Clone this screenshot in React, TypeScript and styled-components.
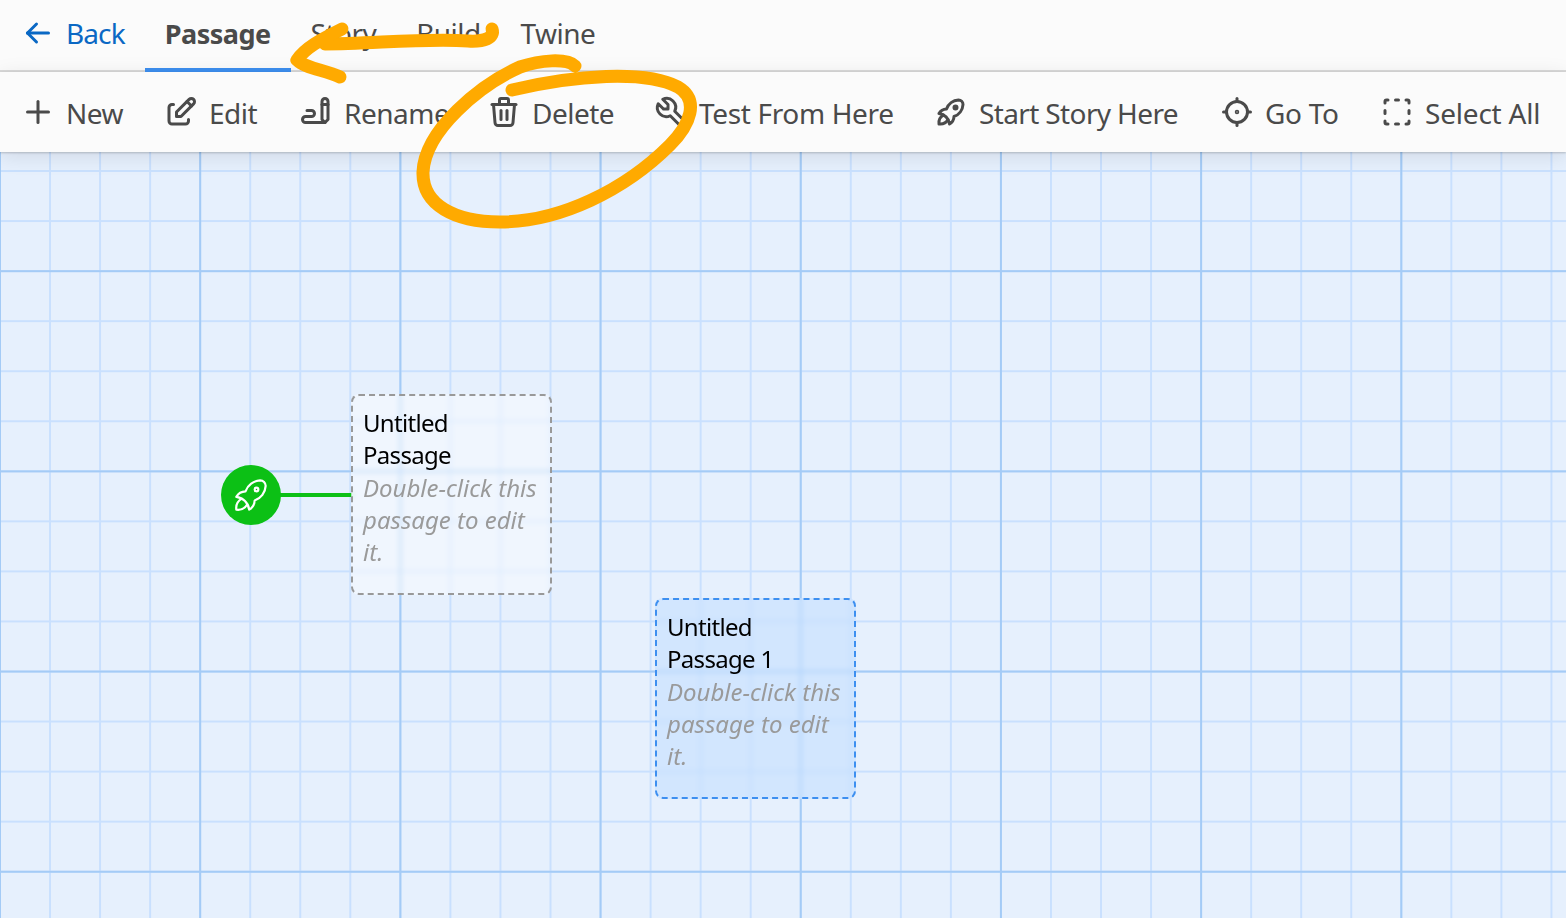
import React from "react";
import styled, { createGlobalStyle } from "styled-components";
import {
  TbArrowLeft,
  TbPlus,
  TbEdit,
  TbWriting,
  TbTrash,
  TbTool,
  TbRocket,
  TbFocus2,
  TbMarquee2,
} from "react-icons/tb";

const GlobalStyle = createGlobalStyle`
  html, body {
    margin: 0;
    padding: 0;
    height: 100%;
    overflow: hidden;
    font-family: "Noto Sans", "Open Sans", sans-serif;
  }
`;

const Page = styled.div`
  position: relative;
  width: 1566px;
  height: 918px;
  display: flex;
  flex-direction: column;
  overflow: hidden;
`;

const TabBar = styled.div`
  height: 70px;
  flex: none;
  display: flex;
  background: #fbfbfb;
  border-bottom: 2px solid #d9d9d9;
`;

const Tab = styled.div<{ $active?: boolean; $link?: boolean }>`
  position: relative;
  box-sizing: border-box;
  display: flex;
  align-items: center;
  gap: 10px;
  padding: 0 20px 4px;
  height: 70px;
  font-size: ${(p) => (p.$active ? 27 : 28)}px;
  letter-spacing: ${(p) => (p.$active ? -0.5 : p.$link ? -0.9 : -0.55)}px;
  font-weight: ${(p) => (p.$active ? 700 : 400)};
  color: ${(p) => (p.$link ? "#0a68c4" : "#4a4a4a")};
  svg {
    width: 36px;
    height: 36px;
  }
  &::after {
    content: "";
    display: ${(p) => (p.$active ? "block" : "none")};
    position: absolute;
    left: 0;
    right: 0;
    bottom: -2px;
    height: 4px;
    background: #3d8ff0;
  }
`;

const Toolbar = styled.div`
  position: relative;
  z-index: 2;
  height: 80px;
  flex: none;
  display: flex;
  align-items: center;
  gap: 41px;
  padding-left: 20px;
  background: #fbfbfb;
  box-shadow: 0 1px 2px rgba(0, 0, 0, 0.2), 0 4px 20px rgba(0, 0, 0, 0.1);
`;

const ToolButton = styled.div`
  display: flex;
  align-items: center;
  gap: 10px;
  font-size: 28px;
  color: #4a4a4a;
  white-space: nowrap;
  svg {
    width: 36px;
    height: 36px;
    flex: none;
  }
`;

const ToolLabel = styled.span<{ $width: number; $tracking: number }>`
  display: block;
  width: ${(p) => p.$width}px;
  padding-top: 2px;
  letter-spacing: ${(p) => p.$tracking}px;
`;

const Canvas = styled.div`
  position: relative;
  flex: 1;
  background-color: #e6f0fd;
  background-image:
    linear-gradient(to right, #a4cbf6 2px, transparent 2px),
    linear-gradient(to bottom, #a4cbf6 2px, transparent 2px),
    linear-gradient(to right, #c9e0fe 2px, transparent 2px),
    linear-gradient(to bottom, #c9e0fe 2px, transparent 2px);
  background-size:
    200.2px 200.2px,
    200.2px 200.2px,
    50.05px 50.05px,
    50.05px 50.05px;
  background-position:
    -1px -1px,
    -1px -82px,
    -1px -1px,
    -1px -32px;
`;

const Passage = styled.div<{ $selected?: boolean; $left: number; $top: number }>`
  position: absolute;
  left: ${(p) => p.$left}px;
  top: ${(p) => p.$top}px;
  box-sizing: border-box;
  width: 200.5px;
  height: 200.5px;
  padding: 11px 10px;
  border-radius: 8px;
  border: 2px dashed ${(p) => (p.$selected ? "#3d8ff0" : "#999")};
  background: ${(p) =>
    p.$selected ? "rgba(190, 220, 255, 0.5)" : "rgba(255, 255, 255, 0.4)"};
  backdrop-filter: blur(2.5px);
  font-size: 24px;
  line-height: 32px;
`;

const PassageTitle = styled.div`
  color: #000;
  letter-spacing: -0.7px;
`;

const PassageExcerpt = styled.div`
  color: #9a9a9a;
  font-style: italic;
  letter-spacing: 0;
  margin-top: 1px;
`;

const StartLink = styled.div`
  position: absolute;
  left: 280px;
  top: 341px;
  width: 72px;
  height: 4px;
  background: #0cc015;
`;

const StartBadge = styled.div`
  position: absolute;
  left: 221px;
  top: 313px;
  width: 60px;
  height: 60px;
  display: flex;
  align-items: center;
  justify-content: center;
  border-radius: 50%;
  background: #0cc015;
  color: #fff;
  svg {
    width: 44px;
    height: 44px;
    stroke-width: 1.2;
  }
`;

const Scribble = styled.svg`
  position: absolute;
  left: 0;
  top: 0;
  z-index: 3;
  pointer-events: none;
`;

const tools = [
  { label: "New", width: 56, tracking: -0.5, Icon: TbPlus },
  { label: "Edit", width: 48, tracking: -0.5, Icon: TbEdit },
  { label: "Rename", width: 101, tracking: -0.5, Icon: TbWriting },
  { label: "Delete", width: 80, tracking: -0.5, Icon: TbTrash },
  { label: "Test From Here", width: 193, tracking: -0.35, Icon: TbTool },
  { label: "Start Story Here", width: 199, tracking: -0.63, Icon: TbRocket },
  { label: "Go To", width: 73, tracking: -0.3, Icon: TbFocus2 },
  { label: "Select All", width: 115, tracking: -0.2, Icon: TbMarquee2 },
];

const App = () => {
  return (
    <>
      <GlobalStyle />
      <Page>
        <TabBar>
          <Tab $link>
            <TbArrowLeft />
            Back
          </Tab>
          <Tab $active>Passage</Tab>
          <Tab>Story</Tab>
          <Tab>Build</Tab>
          <Tab>Twine</Tab>
        </TabBar>
        <Toolbar>
          {tools.map(({ label, width, tracking, Icon }) => (
            <ToolButton key={label}>
              <Icon />
              <ToolLabel $width={width} $tracking={tracking}>
                {label}
              </ToolLabel>
            </ToolButton>
          ))}
        </Toolbar>
        <Canvas>
          <StartLink />
          <StartBadge>
            <TbRocket />
          </StartBadge>
          <Passage $left={351} $top={242}>
            <PassageTitle>Untitled Passage</PassageTitle>
            <PassageExcerpt>Double-click this passage to edit it.</PassageExcerpt>
          </Passage>
          <Passage $selected $left={655} $top={446}>
            <PassageTitle>Untitled Passage 1</PassageTitle>
            <PassageExcerpt>Double-click this passage to edit it.</PassageExcerpt>
          </Passage>
        </Canvas>
        {/* hand drawn markup on top of the screenshot */}
        <Scribble width="1566" height="918" fill="none" stroke="#ffaa00" strokeWidth="13" strokeLinecap="round" strokeLinejoin="round">
          <path d="M492 29C495 38 484 42 468 41C425 38 370 44 325 44" />
          <path d="M342 29C320 40 305 48 297 60C305 68 325 70 340 77" />
          <path d="M575 66C567 58 540 60 520 67C480 85 425 130 423 172C422 205 455 222 500 222C560 222 625 190 670 145C690 125 700 100 678 87C645 70 575 75 512 90" />
        </Scribble>
      </Page>
    </>
  );
};

export default App;
